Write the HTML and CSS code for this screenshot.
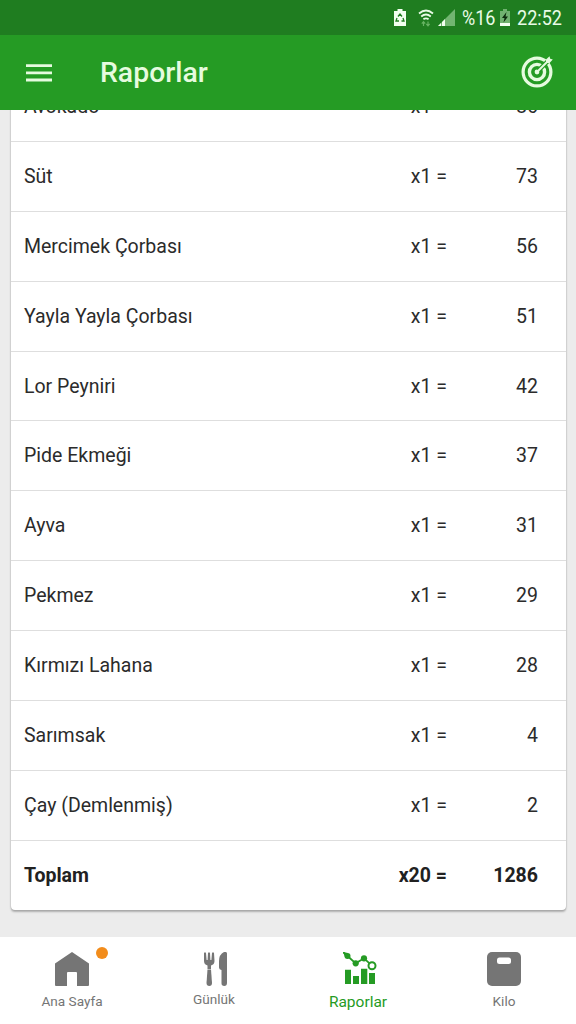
FILE: index.html
```html
<!DOCTYPE html>
<html lang="tr">
<head>
    <meta charset="UTF-8">
    <meta name="viewport" content="width=device-width, initial-scale=1.0">
    <title>Raporlar</title>
    <link rel="stylesheet" href="styles.css">
</head>
<body>
    <div class="status-bar">
        <svg class="status-saver" width="12" height="17" viewBox="0 0 12 17">
            <path d="M3.500 0h5v2H12v15H0V2h3.500z" fill="#f2fff0"/>
            <path d="M4 7.500L6 5l2 2.500M9 9l1 3H7.500M5 12H2l1-3" fill="none" stroke="#1f7d20" stroke-width="1.300"/>
        </svg>
        <svg class="status-wifi" width="16" height="18" viewBox="0 0 16 18">
            <path d="M1 4.500q7-6 14 0M3.200 7.500q4.800-4 9.600 0M5.400 10.300q2.600-2 5.200 0" fill="none" stroke="#e9fbe6" stroke-width="1.800"/>
            <path d="M5.500 17v-4M3.800 14.700l1.700-2 1.700 2M10 12.500v4M8.300 14.800l1.700 2 1.700-2" fill="none" stroke="#67b363" stroke-width="1.200"/>
        </svg>
        <svg class="status-signal" width="17" height="17" viewBox="0 0 17 17">
            <path d="M0 17L17 0v17z" fill="#72b571"/>
            <path d="M0 17l3-3v3zM4 17v-4l3-3v7z" fill="#f2fff0"/>
        </svg>
        <span class="status-text status-percent">%16</span>
        <svg class="status-battery" width="10" height="17" viewBox="0 0 10 17">
            <path d="M3 0h4v2h3v15H0V2h3z" fill="#71b270"/>
            <path d="M0 14h10v3H0z" fill="#f2fff0"/>
            <path d="M6.500 3L2 9h2.500L3.500 13.500 8 7.500H5.500z" fill="#0c2b0c"/>
        </svg>
        <span class="status-text status-time">22:52</span>
    </div>

    <header class="app-bar">
        <svg class="menu-icon" width="26" height="18" viewBox="0 0 26 18">
            <path d="M0 1.600h26M0 8.800h26M0 16h26" stroke="#e6fbdf" stroke-width="2.800"/>
        </svg>
        <h1>Raporlar</h1>
        <svg class="target-icon" width="32" height="32" viewBox="0 0 32 32">
            <g fill="none" stroke="#e6fbdf">
                <circle cx="16" cy="16" r="13.900" stroke-width="3.200"/>
                <circle cx="16" cy="16" r="7.600" stroke-width="3.400"/>
            </g>
            <circle cx="16" cy="16" r="2.400" fill="#e6fbdf"/>
            <path d="M17.500 14.500L28 4" stroke="#249b24" stroke-width="4.400"/>
            <path d="M16 16L28 4" stroke="#e6fbdf" stroke-width="2"/>
            <path d="M25 7V3.500L28.500 .300l.700 2.500 2.600.700L28.500 7z" fill="#e6fbdf"/>
        </svg>
    </header>

    <main class="content">
        <div class="card">
            <div class="row"><span class="name">Avokado</span><span class="count">x1 =</span><span class="value">86</span></div>
            <div class="row"><span class="name">Süt</span><span class="count">x1 =</span><span class="value">73</span></div>
            <div class="row"><span class="name">Mercimek Çorbası</span><span class="count">x1 =</span><span class="value">56</span></div>
            <div class="row"><span class="name">Yayla Yayla Çorbası</span><span class="count">x1 =</span><span class="value">51</span></div>
            <div class="row"><span class="name">Lor Peyniri</span><span class="count">x1 =</span><span class="value">42</span></div>
            <div class="row"><span class="name">Pide Ekmeği</span><span class="count">x1 =</span><span class="value">37</span></div>
            <div class="row"><span class="name">Ayva</span><span class="count">x1 =</span><span class="value">31</span></div>
            <div class="row"><span class="name">Pekmez</span><span class="count">x1 =</span><span class="value">29</span></div>
            <div class="row"><span class="name">Kırmızı Lahana</span><span class="count">x1 =</span><span class="value">28</span></div>
            <div class="row"><span class="name">Sarımsak</span><span class="count">x1 =</span><span class="value">4</span></div>
            <div class="row"><span class="name">Çay (Demlenmiş)</span><span class="count">x1 =</span><span class="value">2</span></div>
            <div class="row total"><span class="name">Toplam</span><span class="count">x20 =</span><span class="value">1286</span></div>
        </div>
    </main>

    <nav class="tabs">
        <a class="tab tab-home">
            <span class="tab-icon">
                <svg width="34" height="34" viewBox="0 0 34 34">
                    <path d="M17 0l17 11.500V33q0 1-1 1H22V21q0-1-1-1h-8q-1 0-1 1v13H1q-1 0-1-1V11.500z" fill="#757575"/>
                </svg>
                <span class="badge"></span>
            </span>
            <span class="label">Ana Sayfa</span>
        </a>
        <a class="tab tab-diary">
            <span class="tab-icon">
                <svg width="24" height="34" viewBox="0 0 24 34">
                    <g fill="#757575">
                        <path d="M0 1q1-1.500 2 0l.600 7h1L4 1q1-1.500 2 0l.400 7h1L8 1q1-1.500 2 0l.500 8q0 3.500-3.500 4.500V17H3.500v-3.500Q0 12.500 0 9z"/>
                        <path d="M3.500 17.500h3.500l1 13.500q0 3-2.700 3T2.500 31z"/>
                        <path d="M23 1.500V31q0 3-2.800 3t-2.700-3V18q-2.500-.500-2.500-2.500V9q0-6.500 5-9 3-.500 3 1.500z"/>
                    </g>
                </svg>
            </span>
            <span class="label">Günlük</span>
        </a>
        <a class="tab tab-reports active">
            <span class="tab-icon">
                <svg width="34" height="34" viewBox="0 -1 34 34">
                    <path d="M0-1l4.500 4 8.200 7.300 8.300-5 8 7.400" fill="none" stroke="#259b24" stroke-width="1.800"/>
                    <path d="M0-1l5 1-3 4zM2 16.700h6V31H2zM10 23h6v8h-6zM18 15.700h6.300V31H18zM26 20h6v11h-6z" fill="#259b24"/>
                    <circle cx="4.500" cy="3" r="3" fill="#259b24"/>
                    <circle cx="12.700" cy="10.300" r="3.100" fill="#259b24"/>
                    <circle cx="21" cy="5.300" r="3.100" fill="#259b24"/>
                    <circle cx="29" cy="12.700" r="3.500" fill="#fff" stroke="#259b24" stroke-width="2"/>
                </svg>
            </span>
            <span class="label">Raporlar</span>
        </a>
        <a class="tab tab-weight">
            <span class="tab-icon">
                <svg width="34" height="34" viewBox="0 0 34 34">
                    <rect width="34" height="34" rx="5" fill="#757575"/>
                    <rect x="10" y="5.500" width="14" height="6.500" rx="2.500" fill="#fff"/>
                </svg>
            </span>
            <span class="label">Kilo</span>
        </a>
    </nav>
</body>
</html>
```

FILE: styles.css
```css
* {
    box-sizing: border-box;
}

body {
    margin: 0;
    height: 1024px;
    display: flex;
    flex-direction: column;
    overflow: hidden;
    font-family: Roboto, sans-serif;
    background-color: #ececec;
    color: #2b2b2b;
}

/* Status bar */
.status-bar {
    height: 35px;
    flex: none;
    display: flex;
    align-items: center;
    justify-content: flex-end;
    padding-right: 14px;
    background-color: #1f7d20;
    color: #e9fbe6;
}

.status-wifi {
    margin-left: 12px;
}

.status-signal {
    margin-left: 4px;
}

/* narrow digits */
.status-text {
    font-size: 20.5px;
    line-height: 24px;
    transform: scaleX(0.88);
    transform-origin: left;
    white-space: nowrap;
}

.status-percent {
    width: 33px;
    margin-left: 7px;
}

.status-time {
    width: 45px;
}

.status-battery {
    margin: 0 7px 0 5px;
}

/* App bar */
.app-bar {
    height: 75px;
    flex: none;
    display: flex;
    align-items: center;
    padding: 0 23px 0 26px;
    background-color: #259b24;
}

h1 {
    flex: 1;
    margin: 0 0 0 48px;
    font-size: 28.4px;
    font-weight: 500;
    color: #e6fbdf;
}

.target-icon {
    margin-bottom: 2px;
}

/* List, scrolled to its end */
.content {
    flex: 1;
    min-height: 0;
    display: flex;
    flex-direction: column;
    justify-content: flex-end;
    overflow: hidden;
    padding: 0 10px 27px 11px;
}

.card {
    flex: none;
    background-color: #fff;
    border-radius: 4px;
    box-shadow: 0 2px 2px rgba(0, 0, 0, 0.25), 0 0 2px rgba(0, 0, 0, 0.2);
}

.row {
    height: 69.9px;
    display: flex;
    align-items: center;
    padding: 0 28px 0 13px;
    border-bottom: 1px solid #dedede;
    font-size: 19.5px;
}

.name {
    flex: 1;
}

.value {
    width: 91px;
    text-align: right;
}

.total {
    height: 69.2px;
    border-bottom: none;
    font-weight: 700;
    color: #212121;
}

/* Bottom tabs */
.tabs {
    height: 87px;
    flex: none;
    display: grid;
    grid-template-columns: repeat(4, 1fr);
    background-color: #fff;
}

.tab {
    display: flex;
    flex-direction: column;
    align-items: center;
    padding-top: 15px;
    font-size: 13.6px;
    color: #757575;
}

.tab-icon {
    position: relative;
    height: 34px;
}

.tab-icon svg {
    display: block;
}

.label {
    margin-top: 7px;
}

.badge {
    position: absolute;
    top: -5px;
    right: -19px;
    width: 12px;
    height: 12px;
    border-radius: 50%;
    background-color: #f28c1b;
}

.tab-diary .label {
    margin: 5px 4px 0 0;
}

.tab-reports .label {
    margin-right: 4px;
}

.active {
    font-size: 15.5px;
    color: #259b24;
}
```
